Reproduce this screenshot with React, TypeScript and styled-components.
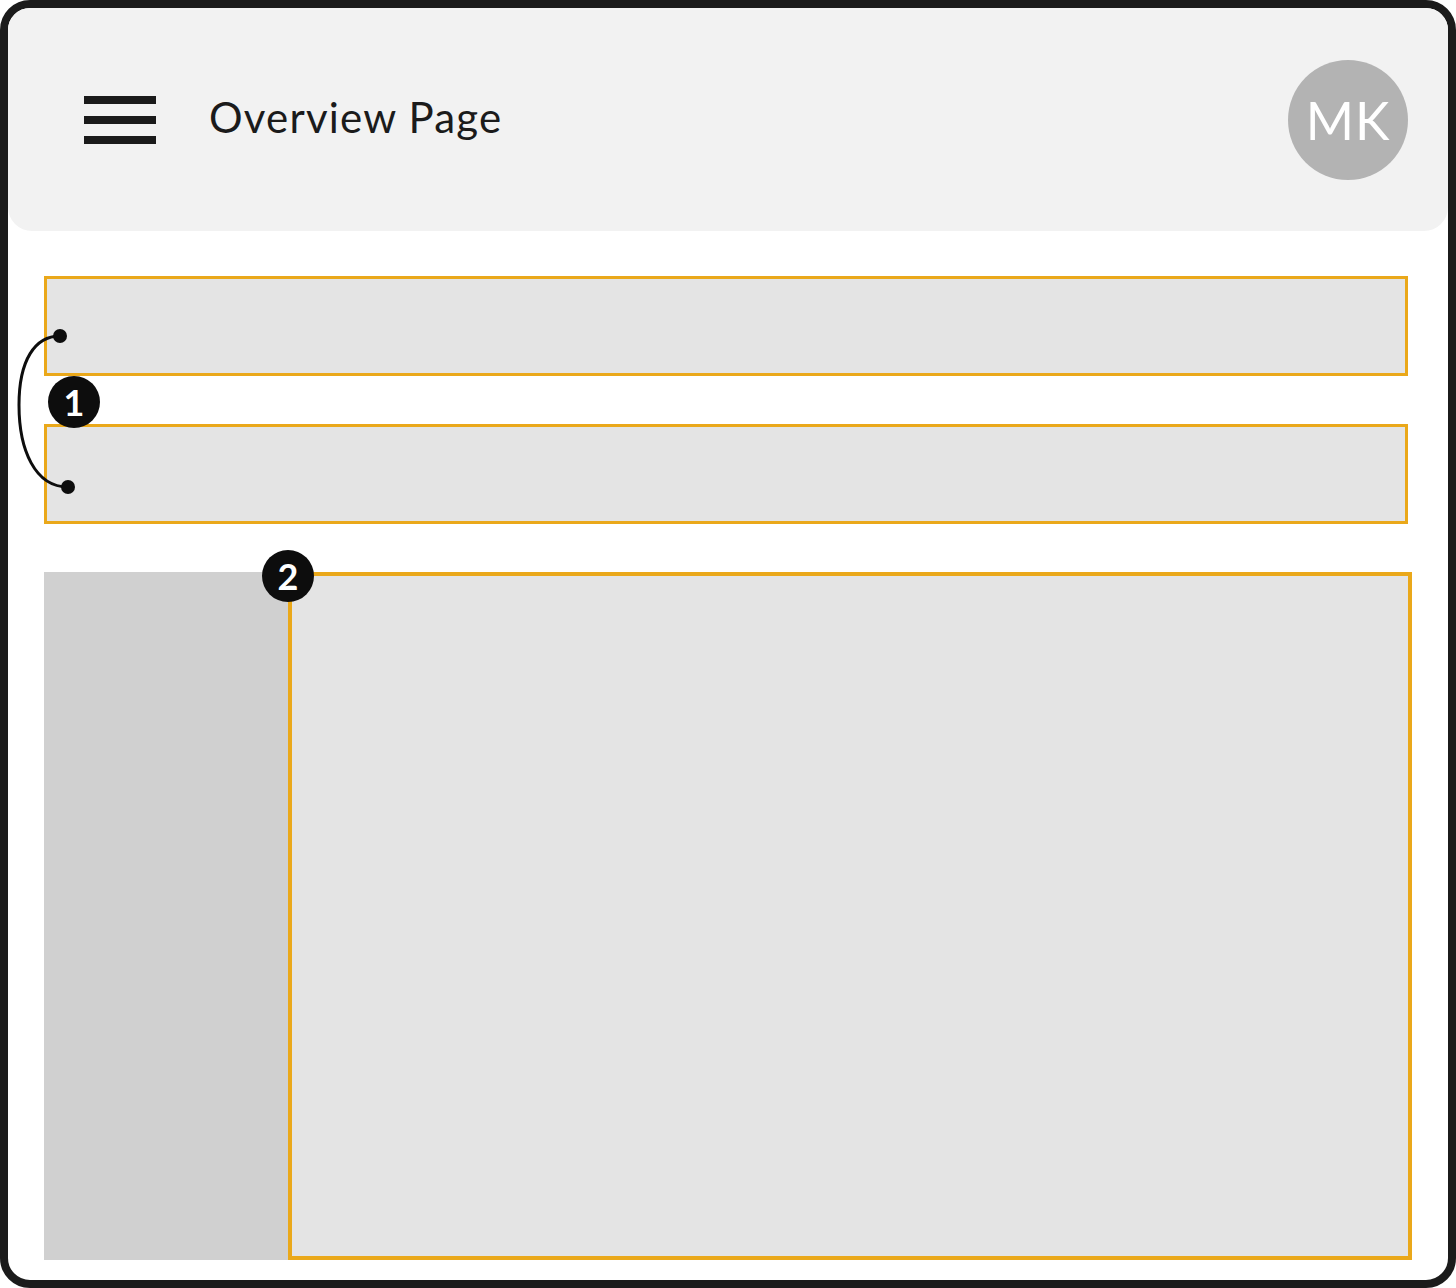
import styled, { createGlobalStyle } from "styled-components";

const GlobalStyle = createGlobalStyle`
  html, body {
    margin: 0;
    padding: 0;
    background: #ffffff;
  }
  * {
    box-sizing: border-box;
  }
`;

const Frame = styled.div`
  width: 1456px;
  height: 1288px;
  border: 8px solid #1b1b1b;
  border-radius: 30px;
  background: #ffffff;
  display: flex;
  flex-direction: column;
  overflow: hidden;
  font-family: "Lato", "Open Sans", sans-serif;
`;

const Header = styled.header`
  height: 223px;
  flex-shrink: 0;
  background: #f2f2f2;
  border-radius: 0 0 24px 24px;
  display: flex;
  align-items: center;
  padding: 0 40px 0 76px;
`;

const MenuButton = styled.div`
  width: 72px;
  display: flex;
  flex-direction: column;
  gap: 12px;
  margin-right: 53px;
`;

const MenuBar = styled.span`
  display: block;
  height: 8px;
  background: #1b1b1b;
`;

const Title = styled.h1`
  margin: 0 0 6px 0;
  flex: 1;
  font-size: 42px;
  font-weight: 400;
  color: #1b1b1b;
  letter-spacing: 1.2px;
`;

const Avatar = styled.div`
  width: 120px;
  height: 120px;
  border-radius: 50%;
  background: #b3b3b3;
  color: #ffffff;
  display: flex;
  align-items: center;
  justify-content: center;
  font-size: 52px;
  font-weight: 400;
  letter-spacing: 1px;
`;

const Content = styled.main`
  flex: 1;
  display: flex;
  flex-direction: column;
  padding: 45px 36px 20px 36px;
`;

const StackGroup = styled.div`
  position: relative;
  display: flex;
  flex-direction: column;
  gap: 48px;
  margin-right: 4px;
  margin-bottom: 48px;
`;

const Block = styled.div<{ $height?: number }>`
  height: ${(p) => p.$height || 100}px;
  background: #e4e4e4;
  border: 3px solid #eaa81a;
`;

const SplitRow = styled.div`
  flex: 1;
  display: grid;
  grid-template-columns: 244px 1fr;
`;

const Sidebar = styled.aside`
  background: #d0d0d0;
`;

const MainPanel = styled.section`
  position: relative;
  background: #e4e4e4;
  border: 4px solid #eaa81a;
`;

const Badge = styled.div<{ $left: number; $top: number }>`
  position: absolute;
  left: ${(p) => p.$left}px;
  top: ${(p) => p.$top}px;
  width: 52px;
  height: 52px;
  border-radius: 50%;
  background: #0d0d0d;
  color: #ffffff;
  display: flex;
  align-items: center;
  justify-content: center;
  font-size: 36px;
  font-weight: 700;
  line-height: 1;
  z-index: 2;
`;

const Connector = styled.svg`
  position: absolute;
  left: -44px;
  top: 0;
  width: 120px;
  height: 248px;
  overflow: visible;
  z-index: 1;
`;

export default function App() {
  return (
    <>
      <GlobalStyle />
      <Frame>
        <Header>
          <MenuButton>
            <MenuBar />
            <MenuBar />
            <MenuBar />
          </MenuButton>
          <Title>Overview Page</Title>
          <Avatar>MK</Avatar>
        </Header>
        <Content>
          <StackGroup>
            <Block />
            <Block />
            <Connector viewBox="0 0 120 248">
              <path
                d="M60,60 C35,60 19,84 19,129 C19,174 35,211 68,211"
                fill="none"
                stroke="#0d0d0d"
                strokeWidth="3"
              />
              <circle cx="60" cy="60" r="7" fill="#0d0d0d" />
              <circle cx="68" cy="211" r="7" fill="#0d0d0d" />
            </Connector>
            <Badge $left={4} $top={100}>1</Badge>
          </StackGroup>
          <SplitRow>
            <Sidebar />
            <MainPanel>
              <Badge $left={-30} $top={-26}>2</Badge>
            </MainPanel>
          </SplitRow>
        </Content>
      </Frame>
    </>
  );
}
